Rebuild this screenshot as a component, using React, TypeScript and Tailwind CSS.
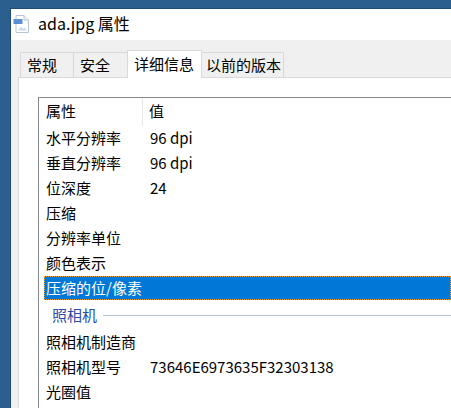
import React from "react";

const font = { fontFamily: '"Noto Sans CJK SC", "Noto Sans", sans-serif' };

function FileIcon() {
  return (
    <svg width="18" height="20" viewBox="0 0 18 20">
      <path d="M3 1.5h8l4.5 4.5v12.5h-12.5z" fill="#ffffff" stroke="#b7c4d6" />
      <path d="M11 1.5v4.5h4.5" fill="#eef2f8" stroke="#b7c4d6" />
      <rect x="0.5" y="5" width="9" height="5" fill="#5b8fd6" />
      <path d="M5 16.5l3-4 2 2.5 1.5-1.5 2.5 3z" fill="#c9daf0" />
    </svg>
  );
}

const tabs = [
  { label: "常规", w: "w-[54px] pl-[6px]" },
  { label: "安全", w: "w-[55px] pl-[6px]" },
  { label: "详细信息", w: "w-[75px] pl-[6px]", active: true },
  { label: "以前的版本", w: "w-[83px] pl-[4px]" },
];

const rowsA = [
  ["水平分辨率", "96 dpi"],
  ["垂直分辨率", "96 dpi"],
  ["位深度", "24"],
  ["压缩", ""],
  ["分辨率单位", ""],
  ["颜色表示", ""],
];

const rowsB = [
  ["照相机制造商", ""],
  ["照相机型号", "73646E6973635F32303138"],
  ["光圈值", ""],
];

function Row({ name, value }: { name: string; value: string }) {
  return (
    <div className="flex h-[25px] items-center pb-[2px]">
      <div className="w-[104px] shrink-0 pl-[7px] text-black">{name}</div>
      <div className="pl-[7px] text-black whitespace-nowrap">{value}</div>
    </div>
  );
}

export default function App() {
  return (
    <div
      className="flex h-[408px] w-[451px] overflow-hidden bg-[#2b5f8e] pl-[10px] pt-[8px] text-[15px] leading-none"
      style={font}
    >
      <div className="flex flex-1 flex-col border-l border-t border-[#1f4a72] bg-white">
        <div className="flex h-[31px] shrink-0 items-center gap-[7px] bg-white pb-[2px] pl-[2px]">
          <FileIcon />
          <span className="pb-[2px] text-[16px] text-black">ada.jpg 属性</span>
        </div>
        <div className="flex flex-1 flex-col bg-[#f0f0f0] pl-[7px] pt-[10px]">
          <div className="relative z-10 ml-[2px] flex h-[27px] items-end">
            {tabs.map((t) =>
              t.active ? (
                <div
                  key={t.label}
                  className={`${t.w} -mb-[1px] -mr-[1px] flex h-[28px] items-center border border-b-0 border-[#d9d9d9] bg-white pb-[3px] text-black`}
                >
                  {t.label}
                </div>
              ) : (
                <div
                  key={t.label}
                  className={`${t.w} -mr-[1px] flex h-[25px] items-center border border-b-0 border-[#d9d9d9] bg-[#f0f0f0] pb-[2px] text-black`}
                >
                  {t.label}
                </div>
              )
            )}
          </div>
          <div className="flex-1 border-l border-t border-[#d9d9d9] bg-white pl-[19px] pt-[19px]">
            <div className="h-full border-l border-t border-[#828790] bg-white">
              <div className="flex h-[28px] items-center">
                <div className="flex h-full w-[104px] shrink-0 items-center border-r border-[#e5e5e5] pb-[3px] pl-[7px] text-black">
                  属性
                </div>
                <div className="pb-[3px] pl-[6px] text-black">值</div>
              </div>
              {rowsA.map(([n, v]) => (
                <Row key={n} name={n} value={v} />
              ))}
              <div className="ml-[5px] flex h-[24px] items-center border border-dotted border-[#f0a030] bg-[#0078d7] pb-[2px] pl-[1px] text-white">
                压缩的位/像素
              </div>
              <div className="flex h-[30px] items-center">
                <span className="pb-[2px] pl-[13px] pr-[6px] text-[#2a4ea8]">照相机</span>
                <div className="h-px flex-1 bg-[#b9c1d9]" />
              </div>
              {rowsB.map(([n, v]) => (
                <Row key={n} name={n} value={v} />
              ))}
            </div>
          </div>
        </div>
      </div>
    </div>
  );
}
